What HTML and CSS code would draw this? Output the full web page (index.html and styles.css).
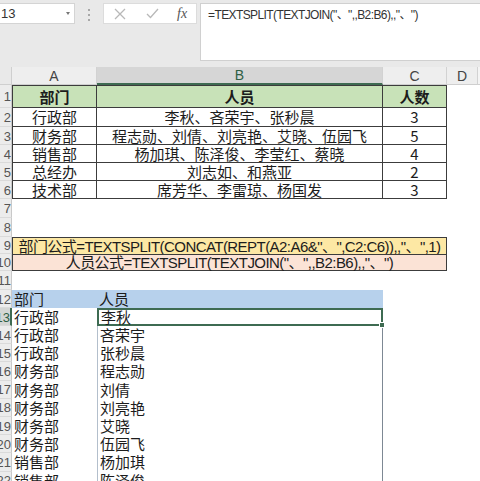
FILE: index.html
```html
<!DOCTYPE html>
<html>
<head>
<meta charset="utf-8">
<link rel="stylesheet" href="styles.css">
</head>
<body>
<div class="toolbar">
  <div class="namebox"><span>13</span><span class="caret"></span></div>
  <div class="dots"><i></i><i></i><i></i></div>
  <div class="btnbox">
    <svg class="ic-x" width="12" height="12" viewBox="0 0 12 12"><path d="M1 1L11 11M11 1L1 11" stroke="#b8b8b8" stroke-width="1.3" fill="none"/></svg>
    <svg class="ic-ok" width="13" height="11" viewBox="0 0 13 11"><path d="M1 6L4.5 9.5L12 1" stroke="#b8b8b8" stroke-width="1.3" fill="none"/></svg>
    <span class="fx">fx</span>
  </div>
  <div class="fbox">=TEXTSPLIT(TEXTJOIN("、",,B2:B6),,"、")</div>
</div>
<div class="sheet">
  <div class="corner"></div>
  <div class="ch">A</div><div class="ch sel">B</div><div class="ch">C</div><div class="ch">D</div><div class="ch end"></div>

  <div class="rh"><span>1</span></div>
  <div class="c t hd bl bt">部门</div><div class="c t hd bt">人员</div><div class="c t hd bt">人数</div><div class="c"></div><div class="c"></div>

  <div class="rh"><span>2</span></div>
  <div class="c t bl">行政部</div><div class="c t">李秋、吝荣宇、张秒晨</div><div class="c t">3</div><div class="c"></div><div class="c"></div>
  <div class="rh"><span>3</span></div>
  <div class="c t bl">财务部</div><div class="c t">程志勋、刘倩、刘亮艳、艾晓、伍园飞</div><div class="c t">5</div><div class="c"></div><div class="c"></div>
  <div class="rh"><span>4</span></div>
  <div class="c t bl">销售部</div><div class="c t">杨加琪、陈泽俊、李莹红、蔡晓</div><div class="c t">4</div><div class="c"></div><div class="c"></div>
  <div class="rh"><span>5</span></div>
  <div class="c t bl">总经办</div><div class="c t">刘志如、和燕亚</div><div class="c t">2</div><div class="c"></div><div class="c"></div>
  <div class="rh"><span>6</span></div>
  <div class="c t bl">技术部</div><div class="c t">席芳华、李雷琼、杨国发</div><div class="c t">3</div><div class="c"></div><div class="c"></div>

  <div class="rh"><span>7</span></div><div class="blank"></div>
  <div class="rh"><span>8</span></div><div class="blank"></div>

  <div class="rh"><span>9</span></div><div class="formula yellow">部门公式=TEXTSPLIT(CONCAT(REPT(A2:A6&amp;"、",C2:C6)),,"、",1)</div><div class="c"></div><div class="c"></div>
  <div class="rh"><span>10</span></div><div class="formula salmon">人员公式=TEXTSPLIT(TEXTJOIN("、",,B2:B6),,"、")</div><div class="c"></div><div class="c"></div>
  <div class="rh"><span>11</span></div><div class="blank"></div>

  <div class="rh"><span>12</span></div>
  <div class="c l blue">部门</div><div class="c l blue">人员</div><div class="c"></div><div class="c"></div><div class="c"></div>

  <div class="rh rsel"><span>13</span></div>
  <div class="c l">行政部</div><div class="c l sp active">李秋<span class="handle"></span></div><div class="c"></div><div class="c"></div><div class="c"></div>
  <div class="rh"><span>14</span></div>
  <div class="c l">行政部</div><div class="c l sp">吝荣宇</div><div class="c"></div><div class="c"></div><div class="c"></div>
  <div class="rh"><span>15</span></div>
  <div class="c l">行政部</div><div class="c l sp">张秒晨</div><div class="c"></div><div class="c"></div><div class="c"></div>
  <div class="rh"><span>16</span></div>
  <div class="c l">财务部</div><div class="c l sp">程志勋</div><div class="c"></div><div class="c"></div><div class="c"></div>
  <div class="rh"><span>17</span></div>
  <div class="c l">财务部</div><div class="c l sp">刘倩</div><div class="c"></div><div class="c"></div><div class="c"></div>
  <div class="rh"><span>18</span></div>
  <div class="c l">财务部</div><div class="c l sp">刘亮艳</div><div class="c"></div><div class="c"></div><div class="c"></div>
  <div class="rh"><span>19</span></div>
  <div class="c l">财务部</div><div class="c l sp">艾晓</div><div class="c"></div><div class="c"></div><div class="c"></div>
  <div class="rh"><span>20</span></div>
  <div class="c l">财务部</div><div class="c l sp">伍园飞</div><div class="c"></div><div class="c"></div><div class="c"></div>
  <div class="rh"><span>21</span></div>
  <div class="c l">销售部</div><div class="c l sp">杨加琪</div><div class="c"></div><div class="c"></div><div class="c"></div>
  <div class="rh"><span>22</span></div>
  <div class="c l">销售部</div><div class="c l sp">陈泽俊</div><div class="c"></div><div class="c"></div><div class="c"></div>
</div>
</body>
</html>
```
FILE: styles.css
```css
* { box-sizing: border-box; margin: 0; padding: 0; }
html, body { width: 480px; height: 481px; overflow: hidden; background: #fff; }
body { font-family: "Liberation Sans", "Noto Sans CJK SC", sans-serif; color: #1c1c1c; }

.toolbar {
  height: 67px;
  background: #e9e9e9;
  display: flex;
  align-items: flex-start;
  padding-top: 3px;
}
.namebox {
  width: 75px; height: 21px;
  background: #fff;
  border: 1px solid #d4d4d4; border-left: none;
  display: flex; align-items: center; justify-content: space-between;
  padding: 0 4px 0 1px;
  font-size: 13px; color: #333;
}
.caret { width: 0; height: 0; border-left: 2.5px solid transparent; border-right: 2.5px solid transparent; border-top: 3px solid #777; }
.dots { width: 28px; display: flex; flex-direction: column; align-items: center; gap: 3px; padding-top: 6px; }
.dots i { display: block; width: 2px; height: 2px; background: #a8a8a8; }
.btnbox {
  width: 94px; height: 21px;
  background: #fff;
  border: 1px solid #dcdcdc;
  display: flex; align-items: center;
  padding-left: 10px;
}
.ic-ok { margin-left: 20px; }
.fx { margin-left: 18px; font-family: "Liberation Serif", serif; font-style: italic; font-size: 14px; color: #555; }
.fbox {
  margin-left: 3px;
  flex: 1; height: 58px;
  background: #fff;
  border: 1px solid #d0d0d0; border-right: none;
  padding: 4px 7px;
  font-size: 12px; line-height: 15px; color: #333;
  letter-spacing: -0.6px;
  white-space: nowrap;
}

.sheet {
  display: grid;
  grid-template-columns: 12px 85px 286px 64px 31px 2px;
  grid-template-rows: 18px 23px 19px 18px 18px 18px 18px 19px 19px 17px 17px 19px 18px 18px 18.2px 18.2px 18.2px 18.2px 18.2px 18.2px 18.2px 18.2px 18.2px;
}
.corner { background: #e9e9e9; border-right: 1px solid #cfcfcf; border-bottom: 1px solid #cfcfcf; }
.ch {
  background: #eeeeee;
  border-right: 1px solid #d2d2d2; border-bottom: 1px solid #cfcfcf;
  display: flex; align-items: center; justify-content: center;
  font-size: 14px; line-height: 16px; color: #444;
}
.ch.sel { background: #d6d6d6; border-bottom: 2px solid #3e6b52; color: #2f5f44; }
.ch.end { border-right: none; background: #f4f4f4; }
.rh {
  background: #ececec;
  border-right: 1px solid #c9c9c9; border-bottom: 1px solid #dadada;
  overflow: hidden;
  font-size: 13px; line-height: 15px; color: #555;
  position: relative;
}
.rh span { position: absolute; right: 0; top: 50%; transform: translateY(-50%); white-space: nowrap; }
.rh.rsel { background: #d4d6d4; color: #2f5f44; border-right: 2px solid #3e6b52; }
.c {
  display: flex; align-items: center;
  font-size: 15px; line-height: 16px; white-space: nowrap;
  font-family: "Noto Sans CJK SC", sans-serif;
}
.c.t {
  justify-content: center;
  border-right: 1px solid #3c3c3c; border-bottom: 1px solid #3c3c3c;
}
.c.bl { border-left: 1px solid #3c3c3c; }
.c.bt { border-top: 1px solid #3c3c3c; }
.c.hd { background: #c8e2b8; font-weight: bold; }
.c.l { justify-content: flex-start; padding-left: 2px; }
.c.blue { background: #b7d1ec; }
.blank { grid-column: 2 / 7; }
.formula {
  grid-column: 2 / 5;
  display: flex; align-items: center; justify-content: center;
  border: 1px solid #3c3c3c;
  font-size: 15px; line-height: 15px; white-space: nowrap;
  letter-spacing: -0.55px;
}
.yellow { background: #fde8a4; border-bottom: none; }
.salmon { background: #fbe3d6; }
.sp { border-left: 1px solid #b3bfcc; border-right: 1px solid #7d8894; }
.active { position: relative; border: 2px solid #3e6b52; padding-left: 1px; }
.handle {
  position: absolute; right: -4px; bottom: -4px;
  width: 6px; height: 6px;
  background: #3e6b52; border: 1px solid #fff;
}
```
